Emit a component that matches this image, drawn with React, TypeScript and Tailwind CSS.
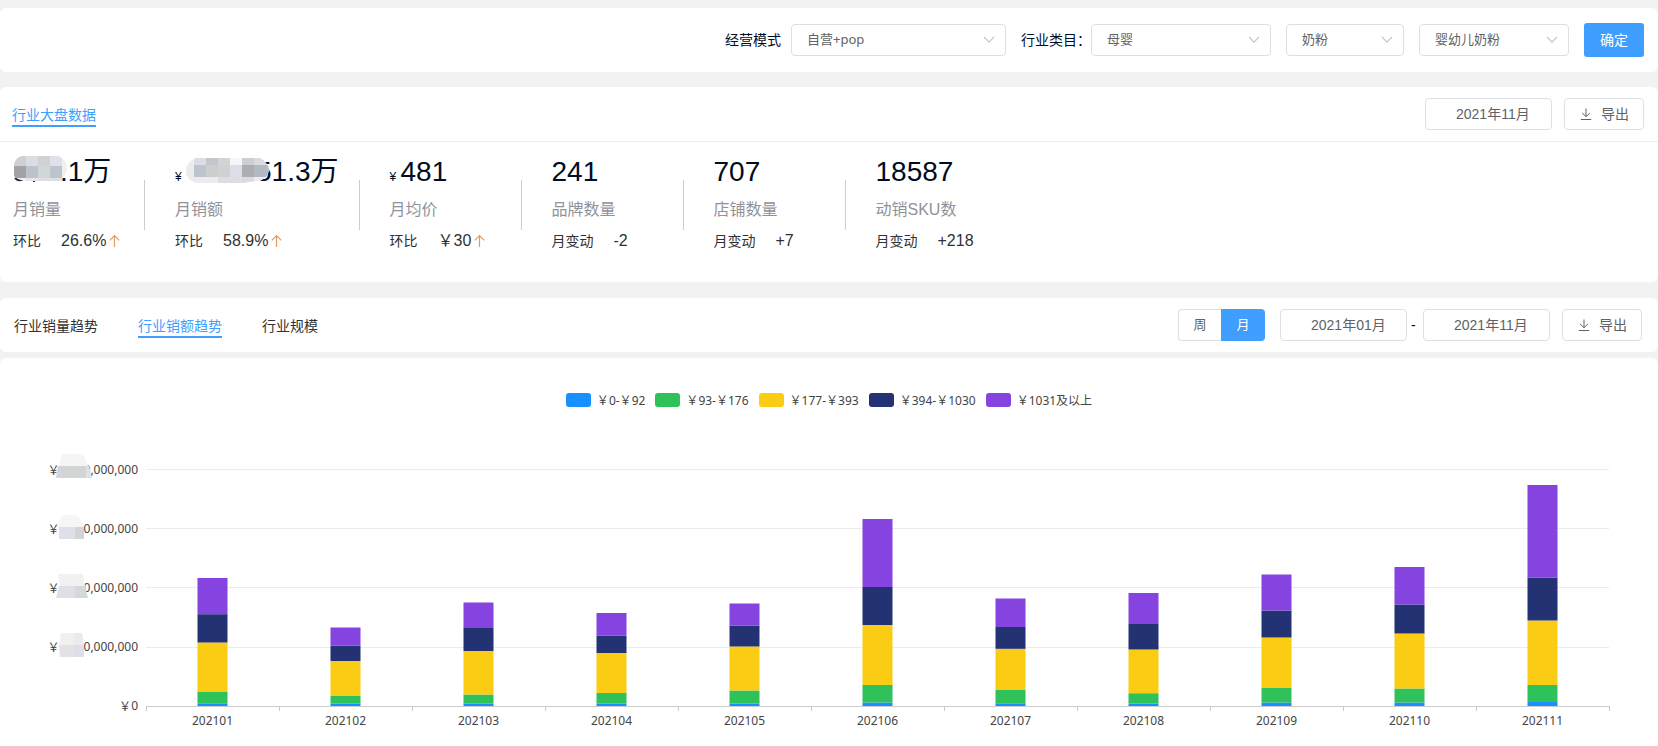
import React from "react";

const series = [
  { name: "¥0-¥92", color: "#1890ff", swatch: "bg-[#1890ff]" },
  { name: "¥93-¥176", color: "#2fc25b", swatch: "bg-[#2fc25b]" },
  { name: "¥177-¥393", color: "#facc14", swatch: "bg-[#facc14]" },
  { name: "¥394-¥1030", color: "#223273", swatch: "bg-[#223273]" },
  { name: "¥1031及以上", color: "#8543e0", swatch: "bg-[#8543e0]" },
];

// cumulative height of every price band, bottom to top
const months = [
  { month: "202101", tops: [3.2, 15, 64, 92.3, 128.5] },
  { month: "202102", tops: [3, 11, 45.5, 61, 79] },
  { month: "202103", tops: [3, 12, 55.5, 78.5, 104] },
  { month: "202104", tops: [3, 13.5, 53.5, 71, 93.5] },
  { month: "202105", tops: [3, 16, 60, 81, 103] },
  { month: "202106", tops: [4, 21.5, 81.5, 119.5, 187.5] },
  { month: "202107", tops: [3.2, 16.5, 57.7, 79.5, 108] },
  { month: "202108", tops: [3, 13.3, 57, 82.5, 113.5] },
  { month: "202109", tops: [4, 18.5, 69, 96, 132] },
  { month: "202110", tops: [4, 18, 73, 102, 139.5] },
  { month: "202111", tops: [4.5, 21.5, 86, 129, 221.5] },
];

const gridLines = [29.5, 88.5, 147.5, 207.5];
const baseLine = 266.5;

const Yen = () => <span className="font-['Noto_Sans_CJK_SC',sans-serif]">￥</span>;

const withYen = (text: string) =>
  text.split("¥").map((part, i) => (
    <React.Fragment key={i}>
      {i > 0 && <Yen />}
      {part}
    </React.Fragment>
  ));

const DownloadIcon = () => (
  <svg className="w-3.5 h-3.5" viewBox="0 0 14 14" fill="none" stroke="currentColor" strokeWidth="1">
    <path d="M7 1.5V9.5M3.2 6 7 9.7 10.8 6M1.8 12.5H12.2" />
  </svg>
);

const UpIcon = () => (
  <svg className="w-4 h-4" viewBox="0 0 16 16" fill="none" stroke="#e39a5f" strokeWidth="1.2">
    <path d="M8.5 2.5V14M3.8 7.4 8.5 2.7 13.2 7.4" />
  </svg>
);

type PickerProps = { id: string; label: string; value: string; width: string };

const Picker = ({ id, label, value, width }: PickerProps) => (
  <div className={"relative " + width}>
    <select
      id={id}
      aria-label={label}
      className="block w-full h-8 pl-[15px] pr-8 pb-0.5 appearance-none rounded border border-[#dcdfe6] bg-white text-[13px] leading-[28px] text-[#606266] font-['Noto_Sans','Noto_Sans_CJK_SC',sans-serif]"
    >
      <option>{value}</option>
    </select>
    <svg
      className="absolute right-[11px] top-[10px] w-3 h-3 pointer-events-none"
      viewBox="0 0 12 12"
      fill="none"
      stroke="#c0c4cc"
      strokeWidth="1.1"
    >
      <path d="M1 3 6 8.2 11 3" />
    </svg>
  </div>
);

const DateBox = ({ label, value }: { label: string; value: string }) => (
  <input
    type="text"
    aria-label={label}
    defaultValue={value}
    className="w-[127px] h-8 pl-[30px] pr-2 pb-0.5 rounded border border-[#dcdfe6] bg-white text-sm text-[#606266]"
  />
);

const ExportButton = () => (
  <button className="flex items-center justify-center gap-2 w-20 h-8 rounded border border-[#dcdfe6] bg-white text-sm text-[#606266]">
    <DownloadIcon />
    导出
  </button>
);

const SalesMosaic = () => (
  <svg className="absolute left-px top-[5px] w-[54px] h-[26px]" viewBox="0 0 54 26">
    <path d="M1 22q4 4 9 1M19 25h2" stroke="#222" strokeWidth="2" fill="none" />
    <clipPath id="salesClip">
      <path d="M8 0H44Q53 3 53 13Q52 19 48 22V25H12Q3 24 0 20V9Q1 2 8 0Z" />
    </clipPath>
    <g clipPath="url(#salesClip)">
      <rect width="54" height="26" fill="#efefef" />
      <rect width="12" height="10" fill="#d0d0d0" />
      <rect x="12" width="12" height="10" fill="#dcdde4" />
      <rect x="24" width="12" height="10" fill="#cfd1d2" />
      <rect x="36" width="12" height="10" fill="#dfe0e8" />
      <rect y="10" width="12" height="12" fill="#a3a3a5" />
      <rect x="12" y="10" width="12" height="12" fill="#bcc3cd" />
      <rect x="24" y="10" width="12" height="12" fill="#d1d6d9" />
      <rect x="36" y="10" width="12" height="12" fill="#bcc4cd" />
      <rect x="12" y="22" width="12" height="4" fill="#e3e4ec" />
      <rect x="24" y="22" width="24" height="4" fill="#dfdfe2" />
    </g>
  </svg>
);

const AmountMosaic = () => (
  <svg className="absolute left-0 top-[7px] w-[86px] h-[26px]" viewBox="0 0 86 26">
    <clipPath id="amountClip">
      <path d="M10 0H74Q81 4 83 11Q83 18 76 22L56 25H10Q0 22 0 13T10 0Z" />
    </clipPath>
    <g clipPath="url(#amountClip)">
      <rect width="86" height="26" fill="#ececee" />
      <rect x="8" width="12" height="7" fill="#dcdde4" />
      <rect x="20" width="12" height="7" fill="#c1c7cb" />
      <rect x="32" width="12" height="7" fill="#d2d4d4" />
      <rect x="44" width="12" height="7" fill="#f5f6f7" />
      <rect x="56" width="12" height="7" fill="#cdd0d0" />
      <rect x="68" width="18" height="7" fill="#d9dae1" />
      <rect x="8" y="7" width="12" height="12" fill="#bdc4cd" />
      <rect x="20" y="7" width="12" height="12" fill="#cbcecd" />
      <rect x="32" y="7" width="12" height="12" fill="#d0d1d0" />
      <rect x="44" y="7" width="12" height="12" fill="#dddee7" />
      <rect x="56" y="7" width="12" height="12" fill="#acaeb1" />
      <rect x="68" y="7" width="18" height="12" fill="#b2bac3" />
      <rect x="32" y="19" width="24" height="7" fill="#dcdde5" />
      <rect x="56" y="19" width="12" height="7" fill="#d9dbdc" />
    </g>
  </svg>
);

type StatProps = {
  value: React.ReactNode;
  label: string;
  change: string;
  diff: React.ReactNode;
  up?: boolean;
  last?: boolean;
};

const Stat = ({ value, label, change, diff, up, last }: StatProps) => (
  <div className="flex items-start">
    <div className="min-w-[131px] pr-5">
      <div className="flex h-[42px] text-[28px] leading-[42px] text-[#000c25]">{value}</div>
      <div className="h-[34px] text-base leading-[34px] text-[#909399]">{label}</div>
      <div className="flex items-center h-7 text-[#303133]">
        <span className="text-sm mr-5">{change}</span>
        <span className="text-base leading-6">{diff}</span>
        {up && <UpIcon />}
      </div>
    </div>
    {!last && <div className="w-px h-[50px] mt-[29px] mr-[30px] bg-[#cccccc]" />}
  </div>
);

const SmallYen = () => <span className="w-[11px] text-xs leading-[52px]">¥</span>;

const axisMosaics = [
  <svg className="absolute -left-1 -top-2 w-9 h-6" viewBox="0 0 36 24">
    <path d="M6 0H27L32 12H3Z" fill="#f5f5f5" />
    <path d="M2 12H30V24H0Z" fill="#d3d4d4" />
    <path d="M30 12H33L36 24H30Z" fill="#dfe0e8" />
  </svg>,
  <svg className="absolute -left-0.5 -top-1.5 w-[26px] h-6" viewBox="0 0 26 24">
    <path d="M0 12Q1 3 6 0H18Q24 4 26 12Z" fill="#f6f6f6" />
    <path d="M1 12H17V24H1Z" fill="#dfe0e7" />
    <path d="M17 12H26V24H17Z" fill="#d3d5d4" />
  </svg>,
  <svg className="absolute -left-1 -top-1.5 w-8 h-6" viewBox="0 0 32 24">
    <path d="M2 0H27L29 12H4Z" fill="#f1f1f1" />
    <path d="M3 12H19V24H0Z" fill="#dfe0e5" />
    <path d="M19 12H29L32 24H19Z" fill="#d6d8d8" />
  </svg>,
  <svg className="absolute -left-px -top-1.5 w-[25px] h-6" viewBox="0 0 25 24">
    <path d="M2 0H15V12H0Z" fill="#f0f0f0" />
    <path d="M15 0H23L25 12H15Z" fill="#ebebec" />
    <path d="M0 12H15V24H1Z" fill="#e2e2e4" />
    <path d="M15 12H25V24H15Z" fill="#dedfe8" />
  </svg>,
];

const TrendChart = () => (
  <div className="flex text-xs text-[#444444] font-['Noto_Sans','Noto_Sans_CJK_SC',sans-serif]">
    <div className="flex flex-col w-[146px] h-[296px] pr-2">
      {axisMosaics.map((mosaic, i) => (
        <div key={i} className="flex flex-1 items-center justify-end leading-4">
          <Yen />
          <span className="relative w-6 h-4">{mosaic}</span>
          <span>0,000,000</span>
        </div>
      ))}
      <div className="flex flex-1 items-center justify-end leading-4">
        <Yen />0
      </div>
    </div>
    <svg className="flex-1 h-[306px] mr-[49px] overflow-visible">
      {gridLines.map((y) => (
        <line key={y} x1="0" x2="100%" y1={y} y2={y} stroke="#ebebeb" />
      ))}
      {months.map(({ month, tops }, i) => (
        <g key={month}>
          {tops.map((top, s) => {
            const bottom = s === 0 ? 0 : tops[s - 1];
            return (
              <rect
                key={s}
                x={((i + 0.5) * 100) / months.length + "%"}
                y={baseLine - top}
                width="30"
                height={top - bottom}
                fill={series[s].color}
                transform="translate(-15 0)"
              />
            );
          })}
          <text
            x={((i + 0.5) * 100) / months.length + "%"}
            y="285"
            textAnchor="middle"
            fill="#444444"
          >
            {month}
          </text>
        </g>
      ))}
      <line x1="0" x2="100%" y1={baseLine} y2={baseLine} stroke="#cccccc" />
      {[...months, null].map((_, i) => (
        <line
          key={i}
          x1={(i * 100) / months.length + "%"}
          x2={(i * 100) / months.length + "%"}
          y1="266"
          y2="271"
          stroke="#cccccc"
          transform="translate(0.5 0)"
        />
      ))}
    </svg>
  </div>
);

const App = () => {
  return (
    <div className="min-h-screen pt-2 bg-[#f2f2f2] text-sm text-[#303133] font-['Liberation_Sans','Noto_Sans_CJK_SC',sans-serif]">
      {/* Filters */}
      <div className="flex items-center justify-end h-16 pr-3.5 rounded-md bg-white text-[#000c25]">
        <label htmlFor="mode" className="mr-2.5">
          经营模式
        </label>
        <Picker id="mode" label="经营模式" value="自营+pop" width="w-[215px] mr-[15px]" />
        <label htmlFor="category">行业类目：</label>
        <Picker id="category" label="行业类目" value="母婴" width="w-[180px] mr-[15px]" />
        <Picker id="category2" label="二级类目" value="奶粉" width="w-[118px] mr-[15px]" />
        <Picker id="category3" label="三级类目" value="婴幼儿奶粉" width="w-[150px] mr-[15px]" />
        <button className="w-[60px] h-[34px] rounded-[3px] bg-[#409eff] text-white">确定</button>
      </div>

      {/* Market overview */}
      <div className="h-[195px] mt-[15px] rounded-md bg-white">
        <div className="flex items-center h-[55px] pl-3 pr-3.5 border-b border-[#ebeef0]">
          <h2 className="mr-auto h-[26px] pt-1 leading-5 border-b-2 border-[#409eff] text-[#409eff]">
            行业大盘数据
          </h2>
          <DateBox label="月份" value="2021年11月" />
          <div className="ml-3">
            <ExportButton />
          </div>
        </div>
        <div className="flex pl-[13px] pt-[9px]">
          <Stat
            value={
              <>
                <span className="relative w-[47px]">
                  <SalesMosaic />
                </span>
                .1万
              </>
            }
            label="月销量"
            change="环比"
            diff="26.6%"
            up
          />
          <Stat
            value={
              <>
                <SmallYen />
                <span className="relative z-10 w-[70px]">
                  <AmountMosaic />
                </span>
                51.3万
              </>
            }
            label="月销额"
            change="环比"
            diff="58.9%"
            up
          />
          <Stat
            value={
              <>
                <SmallYen />
                481
              </>
            }
            label="月均价"
            change="环比"
            diff="￥30"
            up
          />
          <Stat value="241" label="品牌数量" change="月变动" diff="-2" />
          <Stat value="707" label="店铺数量" change="月变动" diff="+7" />
          <Stat value="18587" label="动销SKU数" change="月变动" diff="+218" last />
        </div>
      </div>

      {/* Trend tabs */}
      <div className="flex items-center h-[54px] mt-4 pl-3.5 pr-4 rounded-md bg-white">
        <div className="flex gap-10 mr-auto">
          <button className="h-[26px] pt-1 leading-5 border-b-2 border-transparent">行业销量趋势</button>
          <button className="h-[26px] pt-1 leading-5 border-b-2 border-[#409eff] text-[#409eff]">
            行业销额趋势
          </button>
          <button className="h-[26px] pt-1 leading-5 border-b-2 border-transparent">行业规模</button>
        </div>
        <div className="flex mr-[15px] text-[13px]">
          <button className="w-[43px] h-8 rounded-l border border-r-0 border-[#dcdfe6] text-[#606266]">
            周
          </button>
          <button className="w-11 h-8 rounded-r bg-[#409eff] text-white">月</button>
        </div>
        <DateBox label="开始月份" value="2021年01月" />
        <span className="w-4 pl-1 text-black">-</span>
        <DateBox label="结束月份" value="2021年11月" />
        <div className="ml-3">
          <ExportButton />
        </div>
      </div>

      {/* Trend chart */}
      <div className="mt-1.5 pt-[35px] rounded-t-md bg-white">
        <div className="flex justify-center gap-2.5 mb-[33px] text-xs leading-[14px] text-[#444444] font-['Noto_Sans','Noto_Sans_CJK_SC',sans-serif]">
          {series.map((item) => (
            <div key={item.name} className="flex items-center gap-1.5 h-3.5">
              <span className={"w-[25px] h-3.5 rounded-[3px] " + item.swatch} />
              <span>{withYen(item.name)}</span>
            </div>
          ))}
        </div>
        <TrendChart />
      </div>
    </div>
  );
};

export default App;
